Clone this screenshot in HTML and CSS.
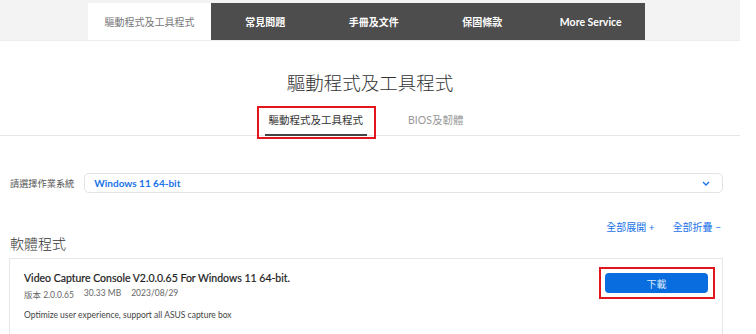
FILE: index.html
```html
<!DOCTYPE html>
<html lang="zh-Hant">
<head>
  <meta charset="utf-8" />
  <title>驅動程式及工具程式</title>
  <link rel="stylesheet" href="styles.css">
</head>
<body>
  <div class="page">
    <nav class="topnav">
      <a class="topnav-item active" href="#">驅動程式及工具程式</a>
      <a class="topnav-item" href="#">常見問題</a>
      <a class="topnav-item" href="#">手冊及文件</a>
      <a class="topnav-item" href="#">保固條款</a>
      <a class="topnav-item latin" href="#">More Service</a>
    </nav>

    <h1 class="page-title">驅動程式及工具程式</h1>

    <div class="subtabs">
      <a class="subtab current" href="#">驅動程式及工具程式</a>
      <a class="subtab" href="#">BIOS及韌體</a>
    </div>

    <div class="content">
      <div class="os-row">
        <span class="os-label">請選擇作業系統</span>
        <div class="os-select">
          <span>Windows 11 64-bit</span>
          <svg class="chevron" width="8" height="5" viewBox="0 0 8 5"><path d="M1 1l3 3 3-3" fill="none" stroke="#1a73e8" stroke-width="1.4"/></svg>
        </div>
      </div>

      <div class="toggle-row">
        <a href="#">全部展開 +</a>
        <a href="#">全部折疊 −</a>
      </div>

      <h2 class="section-title">軟體程式</h2>

      <div class="card">
        <div class="card-info">
          <div class="card-title">Video Capture Console V2.0.0.65 For Windows 11 64-bit.</div>
          <div class="card-meta">
            <span>版本 2.0.0.65</span>
            <span>30.33 MB</span>
            <span>2023/08/29</span>
          </div>
          <p class="card-desc">Optimize user experience, support all ASUS capture box</p>
        </div>
        <div class="download-wrap">
          <a class="download-btn" href="#">下載</a>
        </div>
      </div>
    </div>
  </div>
</body>
</html>
```

FILE: styles.css
```css
html, body {
  margin: 0;
  padding: 0;
  background: #fff;
  font-family: Lato, "Noto Sans", "Noto Sans CJK TC", sans-serif;
  color: #333;
}

a {
  text-decoration: none;
  color: inherit;
}

.page {
  width: 740px;
}

/* top navigation */
.topnav {
  display: flex;
  align-items: flex-end;
  height: 40px;
  padding-left: 88px;
  background: #f3f3f3;
  border-bottom: 1px solid #ececec;
}

.topnav-item {
  display: flex;
  align-items: center;
  justify-content: center;
  height: 37px;
  width: 108.5px;
  background: #4d4d4d;
  color: #fff;
  font-size: 10px;
  font-weight: 700;
}

.topnav-item.active {
  width: 123px;
  background: #fff;
  color: #777;
  font-weight: 400;
}

.topnav-item.latin {
  font-size: 10.5px;
}

/* heading + sub tabs */
.page-title {
  margin: 29px 0 0;
  text-align: center;
  font-size: 18.5px;
  line-height: 26px;
  font-weight: 300;
  color: #333;
}

.subtabs {
  display: flex;
  justify-content: center;
  gap: 37px;
  margin-top: 14px;
  padding-right: 8px;
  border-bottom: 1px solid #e6e6e6;
}

.subtab {
  position: relative;
  padding: 0 4px;
  height: 24px;
  line-height: 20px;
  font-size: 10.5px;
  color: #999;
}

.subtab.current {
  color: #333;
  border-bottom: 2px solid #444;
  margin-bottom: -1px;
}

.subtab.current::after {
  content: "";
  position: absolute;
  top: -4px;
  bottom: -5px;
  left: -8px;
  right: -9px;
  border: 2px solid #e3161e;
}

/* content */
.content {
  padding: 0 17px 0 9px;
}

.os-row {
  display: flex;
  align-items: center;
  gap: 10px;
  margin-top: 37px;
  padding-left: 1px;
}

.os-label {
  font-size: 9.2px;
  color: #555;
}

.os-select {
  flex: 1;
  display: flex;
  align-items: center;
  justify-content: space-between;
  height: 18px;
  padding: 0 12px 0 9px;
  border: 1px solid #e3e3e3;
  border-radius: 5px;
  font-size: 10px;
  font-weight: 700;
  color: #1a73e8;
}

.toggle-row {
  display: flex;
  justify-content: flex-end;
  gap: 18px;
  margin-top: 26px;
  padding-right: 2px;
  font-size: 10px;
  color: #1a73e8;
}

.section-title {
  margin: 0 0 0 1px;
  font-size: 14px;
  line-height: 20px;
  font-weight: 300;
  color: #333;
}

.card {
  display: flex;
  justify-content: space-between;
  align-items: flex-start;
  margin-top: 4px;
  height: 70px;
  padding: 13px 14px 0 14px;
  border: 1px solid #e6e6e6;
  border-bottom: none;
}

.card-title {
  font-size: 10.5px;
  font-weight: 400;
  color: #222;
  -webkit-text-stroke: 0.2px #222;
}

.card-meta {
  display: flex;
  gap: 10px;
  margin-top: 4px;
  font-size: 8.5px;
  color: #666;
}

.card-desc {
  margin: 10px 0 0;
  font-size: 8.5px;
  color: #444;
}

.download-wrap {
  position: relative;
  margin-top: 1px;
}

.download-btn {
  display: flex;
  align-items: center;
  justify-content: center;
  width: 103px;
  height: 20px;
  border-radius: 4px;
  background: #0a6ddf;
  color: #dce9fa;
  font-size: 10px;
}

.download-wrap::after {
  content: "";
  position: absolute;
  top: -6px;
  bottom: -6px;
  left: -6px;
  right: -7px;
  border: 2px solid #e3161e;
}
```
